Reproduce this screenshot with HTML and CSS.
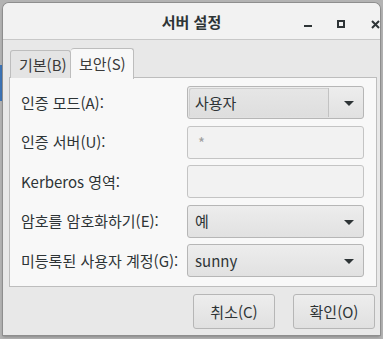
FILE: index.html
```html
<!DOCTYPE html>
<html lang="ko">
<head>
  <title>서버 설정</title>
  <meta charset="UTF-8">
  <meta name="viewport" content="width=device-width, initial-scale=1.0">
  <link rel="stylesheet" href="styles.css">
</head>
<body>
  <div class="desk-marker"></div>

  <div class="window">
    <div class="titlebar">
      <span class="title">서버 설정</span>
      <div class="controls">
        <span class="ctl-min"></span>
        <span class="ctl-max"></span>
        <svg class="ctl-close" width="9" height="9" viewBox="0 0 9 9">
          <path d="M1 1 L8 8 M8 1 L1 8" stroke="#2e3436" stroke-width="2" fill="none"/>
        </svg>
      </div>
    </div>

    <div class="content">
      <div class="tabs">
        <div class="tab">기본(B)</div>
        <div class="tab active">보안(S)</div>
      </div>

      <div class="page">
        <label class="field-label">인증 모드(A):</label>
        <div class="combo combo-split">
          <span class="combo-inner">사용자</span>
          <span class="arrow"></span>
        </div>

        <label class="field-label">인증 서버(U):</label>
        <div class="entry placeholder">*</div>

        <label class="field-label">Kerberos 영역:</label>
        <div class="entry"></div>

        <label class="field-label">암호를 암호화하기(E):</label>
        <div class="combo">
          <span class="combo-text">예</span>
          <span class="arrow"></span>
        </div>

        <label class="field-label">미등록된 사용자 계정(G):</label>
        <div class="combo">
          <span class="combo-text">sunny</span>
          <span class="arrow"></span>
        </div>
      </div>

      <div class="actions">
        <button class="btn">취소(C)</button>
        <button class="btn">확인(O)</button>
      </div>
    </div>
  </div>
</body>
</html>
```

FILE: styles.css
```css
body {
  margin: 0;
  height: 339px;
  background-color: #b3b3b3;
  font-family: "Noto Sans CJK KR", sans-serif;
  font-size: 15px;
  line-height: 20px;
  color: #2e3436;
  overflow: hidden;
  position: relative;
}

/* bit of a blue window peeking out behind the dialog */
.desk-marker {
  position: absolute;
  left: 0;
  top: 65px;
  width: 3px;
  height: 36px;
  background-color: #3d74b6;
}

.window {
  position: relative;
  margin: 3px 0 0 3px;
  width: 377px;
  height: 332px;
  background-color: #e8e8e8;
  border-radius: 6px 6px 0 0;
  box-shadow: 0 0 0 1px #8e8e8e, 0 2px 3px rgba(0, 0, 0, 0.25);
  display: flex;
  flex-direction: column;
}

.titlebar {
  height: 36px;
  border-bottom: 1px solid #c8c8c8;
  background-color: #f2f2f2;
  border-radius: 6px 6px 0 0;
  display: flex;
  align-items: center;
  justify-content: center;
  position: relative;
}

.title {
  font-weight: bold;
  color: #2e3436;
  margin-top: 1px;
}

.controls {
  position: absolute;
  right: 0;
  top: 0;
  height: 36px;
  width: 90px;
}

.ctl-min {
  position: absolute;
  left: 14px;
  top: 22px;
  width: 8px;
  height: 2px;
  background-color: #2e3436;
}

.ctl-max {
  position: absolute;
  left: 47px;
  top: 17px;
  width: 4px;
  height: 4px;
  border: 2px solid #2e3436;
}

.ctl-close {
  position: absolute;
  left: 81px;
  top: 17px;
}

.content {
  flex: 1;
  padding: 8px 3px 0 6px;
  display: flex;
  flex-direction: column;
}

.tabs {
  display: flex;
  align-items: flex-end;
  padding-left: 1px;
  height: 30px;
  margin-bottom: -1px;
  position: relative;
  z-index: 1;
}

.tab {
  box-sizing: border-box;
  width: 61px;
  height: 28px;
  line-height: 27px;
  padding-left: 8px;
  border: 1px solid #bdbdbd;
  border-bottom: none;
  border-radius: 3px 3px 0 0;
  background-color: #e4e4e4;
  color: #3a3a3a;
  white-space: nowrap;
}

.tab.active {
  width: 63px;
  height: 31px;
  line-height: 30px;
  padding-left: 8px;
  background-color: #f8f8f8;
  border-left: none;
  margin-bottom: -1px;
}

.page {
  border: 1px solid #bdbdbd;
  background-color: #f8f8f8;
  padding: 8px 12px 9px 11px;
  display: grid;
  grid-template-columns: 1fr 177px;
  grid-auto-rows: 33px;
  row-gap: 6.5px;
  align-items: center;
}

.field-label {
  color: #2e3436;
  white-space: nowrap;
}

.entry {
  box-sizing: border-box;
  height: 33px;
  border: 1px solid #c4c4c4;
  border-radius: 3px;
  background-color: #f2f2f2;
  padding-left: 10px;
  line-height: 31px;
}

.entry.placeholder {
  color: #a0a0a0;
}

.combo {
  height: 33px;
  box-sizing: border-box;
  border: 1px solid #b6b6b6;
  border-radius: 3px;
  background: linear-gradient(#ededed, #e1e1e1);
  display: flex;
  align-items: center;
  position: relative;
}

.combo-text {
  flex: 1;
  padding-left: 7px;
}

.combo-split {
  padding: 1px;
}

.combo-inner {
  flex: none;
  width: 133px;
  height: 29px;
  line-height: 29px;
  padding-left: 6px;
  border-right: 1px solid #c2c2c2;
  border-radius: 2px 0 0 2px;
  background: linear-gradient(#e6e6e6, #dedede);
  box-shadow: inset 1px 1px 0 #cfcfcf;
}

.arrow {
  position: absolute;
  right: 9px;
  top: 14px;
  width: 0;
  height: 0;
  border-left: 5px solid transparent;
  border-right: 5px solid transparent;
  border-top: 5px solid #2e3436;
}

.actions {
  display: flex;
  justify-content: flex-end;
  gap: 18px;
  padding: 7px 2px 0 0;
}

.btn {
  width: 82px;
  height: 35px;
  font-family: inherit;
  font-size: 15px;
  color: #2e3436;
  border: 1px solid #b6b6b6;
  border-radius: 3px;
  background: linear-gradient(#ededed, #e0e0e0);
  cursor: pointer;
}
```
